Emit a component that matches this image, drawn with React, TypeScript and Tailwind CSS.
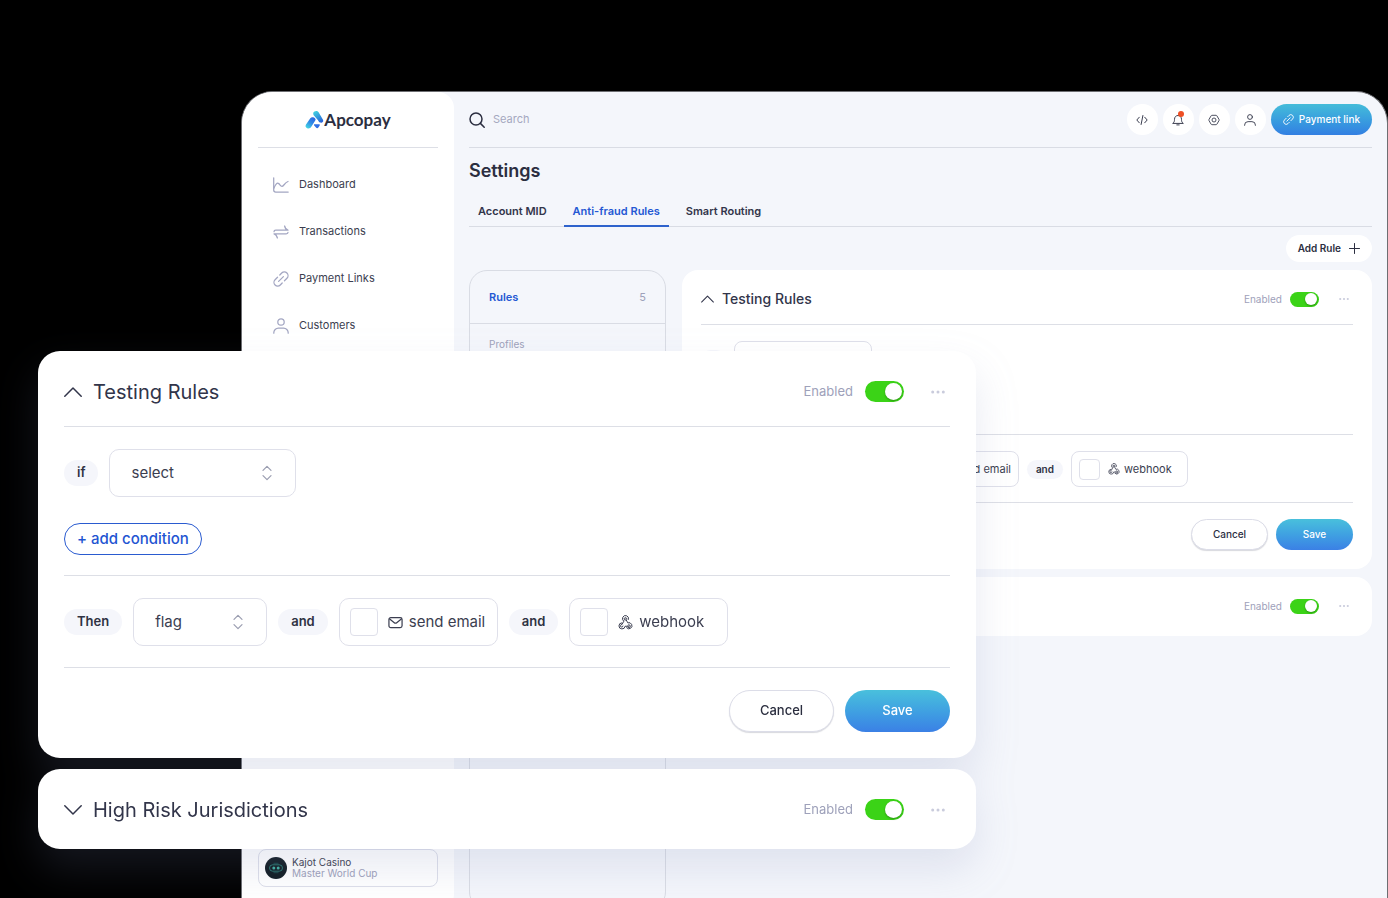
import React, { useId, useState } from 'react';
import clsx from 'clsx';

type Size = 'sm' | 'lg';

interface IconProps {
  className?: string;
}

const ChartIcon = ({ className }: IconProps) => (
  <svg className={className} viewBox="0 0 16 16" fill="none" stroke="currentColor" strokeWidth="1.250" strokeLinecap="round" strokeLinejoin="round">
    <path d="M.7.8v12.200a2 2 0 0 0 2 2h12.500" />
    <path d="M.9 11.200C2.400 7.400 4 5.600 5.400 6.400c1.500.8 1.900 3 3.600 3 1.600 0 2.600-3.600 6-4.900" />
  </svg>
);

const TransferIcon = ({ className }: IconProps) => (
  <svg className={className} viewBox="0 0 16 16" fill="none" stroke="currentColor" strokeWidth="1.250" strokeLinecap="round" strokeLinejoin="round">
    <path d="M1 7.700C1 6.700 1.700 6.200 2.800 6.200H15C13.200 5.800 12.100 4.200 11.600 2" />
    <path d="M15 8.300c0 1-.7 1.500-1.800 1.500H1c1.800.4 2.900 2 3.400 4.200" />
  </svg>
);

const LinkIcon = ({ className }: IconProps) => (
  <svg className={className} viewBox="0 0 16 16" fill="none" stroke="currentColor" strokeWidth="1.250" strokeLinecap="round" strokeLinejoin="round">
    <g transform="rotate(-45 8 8)">
      <path d="M10 4.300h2.700a3.700 3.700 0 0 1 0 7.400H9.200" />
      <path d="M6 11.700H3.300a3.700 3.700 0 0 1 0-7.400h3.500" />
      <path d="M4.600 8h6.800" />
    </g>
  </svg>
);

const PersonIcon = ({ className }: IconProps) => (
  <svg className={className} viewBox="0 0 16 16" fill="none" stroke="currentColor" strokeWidth="1.250" strokeLinecap="round" strokeLinejoin="round">
    <circle cx="8" cy="4" r="3.200" />
    <path d="M.8 15.200v-.4a4.600 4.600 0 0 1 4.600-4.600h5.200a4.600 4.600 0 0 1 4.600 4.600v.4" />
  </svg>
);

const CodeIcon = ({ className }: IconProps) => (
  <svg className={className} viewBox="0 0 12 12" fill="none" stroke="currentColor" strokeLinecap="round" strokeLinejoin="round">
    <path d="M3.300 3.200.8 6l2.500 2.800M8.700 3.200 11.200 6 8.700 8.800M6.900 1.500 5.100 10.500" />
  </svg>
);

const BellIcon = ({ className }: IconProps) => (
  <svg className={className} viewBox="0 0 12 12" fill="none" stroke="currentColor" strokeLinecap="round" strokeLinejoin="round">
    <path d="M1 9.200c1.200-.8 1.500-1.900 1.500-3.900C2.500 3 4 1.500 6 1.500S9.500 3 9.500 5.300c0 2 .3 3.100 1.500 3.900z" />
    <path d="M4.800 10.900h2.400" />
  </svg>
);

const GearIcon = ({ className }: IconProps) => (
  <svg className={className} viewBox="0 0 12 12" fill="none" stroke="currentColor" strokeWidth=".9" strokeLinejoin="round">
    <path d="M4 1.300h4q.6 0 .9.500L11 5.400q.3.600 0 1.200L8.900 10.200q-.3.500-.9.500H4q-.6 0-.9-.5L1 6.600q-.3-.6 0-1.200L3.100 1.800q.3-.5.900-.5z" />
    <circle cx="6" cy="6" r="2" />
  </svg>
);

const SearchIcon = ({ className }: IconProps) => (
  <svg className={className} viewBox="0 0 16 16" fill="none" stroke="currentColor" strokeWidth="1.500" strokeLinecap="round">
    <circle cx="7" cy="7" r="6" />
    <path d="m11.400 11.400 3.800 3.800" />
  </svg>
);

const MailIcon = ({ className }: IconProps) => (
  <svg className={className} viewBox="0 0 16 16" fill="none" stroke="currentColor" strokeWidth="1.300" strokeLinecap="round" strokeLinejoin="round">
    <rect x="1" y="2.700" width="14" height="10.800" rx="2" />
    <path d="M1.800 4.200 6.700 8.200a2 2 0 0 0 2.600 0l4.900-4" />
  </svg>
);

const WebhookIcon = ({ className }: IconProps) => (
  <svg className={className} viewBox="0 0 24 24" fill="none" stroke="currentColor" strokeWidth="1.600" strokeLinecap="round" strokeLinejoin="round">
    <path d="M16.800 7A4.900 4.900 0 1 0 9.300 9.900L6.300 15.300a2 2 0 1 0 1.600 2.300" />
    <path d="M14.200 6.600a2.200 2.200 0 1 0-2.800 2M12.200 6.300l3.500 6.300a4.900 4.900 0 1 1-1.900 7.900" />
    <path d="M6 12.500a4.900 4.900 0 1 0 5.300 5.500h6.200" />
    <path d="M15.900 16.200a2.300 2.300 0 1 1 0 3.500" />
  </svg>
);

const SortIcon = ({ className }: IconProps) => (
  <svg className={className} viewBox="0 0 10 16" fill="none" stroke="currentColor" strokeWidth="1.200" strokeLinecap="round" strokeLinejoin="round">
    <path d="M1 5.300 5 1.300l4 4M1 10.700l4 4 4-4" />
  </svg>
);

const Chevron = ({ up, className }: IconProps & { up: boolean }) => (
  <svg className={className} viewBox="0 0 18 10" fill="none" stroke="currentColor" strokeWidth="1.500" strokeLinecap="round" strokeLinejoin="round">
    <path d={up ? 'M.8 9.200 9 1l8.200 8.200' : 'M.8.800 9 9l8.200-8.200'} />
  </svg>
);

const Logo = () => (
  <svg className="h-[19px] w-[19px]" viewBox="0 0 19 19" fill="none">
    <defs>
      <linearGradient id="logo-left" x1="9" y1="7" x2="1" y2="18" gradientUnits="userSpaceOnUse">
        <stop offset="0" stopColor="#2a63e0" />
        <stop offset=".45" stopColor="#2f86e6" />
        <stop offset="1" stopColor="#45dde4" />
      </linearGradient>
      <linearGradient id="logo-right" x1="10" y1="1" x2="17" y2="13" gradientUnits="userSpaceOnUse">
        <stop offset="0" stopColor="#41d3e0" />
        <stop offset="1" stopColor="#2558d8" />
      </linearGradient>
    </defs>
    <path d="M8.300 2.800C9 .9 12.200.1 13.600 2.200L18 9.800c1 2-1 3.300-2.800 2.700-1.300-.5-1.700-1.400-2.400-2.600L8.700 5.200C8.200 4.400 8 3.600 8.300 2.800z" fill="url(#logo-right)" />
    <path d="M5.300 8.300c1-1.500 3.700-1.300 5 .4.500.7.200 1.300-.2 2L6.300 16.800c-.9 1.500-2.500 2-4.100 1.400-1.700-.7-2.100-2.300-1.200-3.800z" fill="url(#logo-left)" />
    <path d="M9.600 14.300h4.400c.8 0 1.100.6.700 1.200l-1.300 2c-.6.900-1.800.9-2.400.1l-1.800-2.100c-.5-.6-.4-1.200.4-1.200z" fill="#2f6fe6" />
  </svg>
);

const Dots = ({ size }: { size: Size }) => (
  <button type="button" aria-label="More actions" className="flex items-center text-[#c9cbdc]">
    <svg className={size === 'lg' ? 'h-4 w-[14px]' : 'h-3 w-[10px]'} viewBox="0 0 14 4" fill="currentColor">
      <circle cx="1.700" cy="2" r="1.500" />
      <circle cx="7" cy="2" r="1.500" />
      <circle cx="12.300" cy="2" r="1.500" />
    </svg>
  </button>
);

const Toggle = ({ size }: { size: Size }) => {
  const id = useId();
  const [on, setOn] = useState(true);
  const lg = size === 'lg';
  return (
    <div className={clsx('flex items-center', lg ? 'gap-3' : 'gap-2')}>
      <label htmlFor={id} className={clsx('text-[#9ea1ba]', lg ? 'text-[13px]' : 'text-[10px]')}>
        Enabled
      </label>
      <input
        id={id}
        type="checkbox"
        role="switch"
        checked={on}
        onChange={(e) => setOn(e.target.checked)}
        className={clsx(
          'flex cursor-pointer appearance-none items-center rounded-full bg-gray-300 px-[2px] before:block before:rounded-full before:bg-white before:shadow-[0_1px_2px_rgba(0,0,0,0.3)] before:content-[""] checked:justify-end checked:bg-[#3bd317]',
          lg ? 'h-[21px] w-[39px] before:size-[17px]' : 'h-[15px] w-[29px] before:size-3',
        )}
      />
    </div>
  );
};

const Pill = ({ size, children }: { size: Size; children: React.ReactNode }) => (
  <span
    className={clsx(
      'flex items-center rounded-full bg-[#f5f6fb] font-semibold text-[#2f3243]',
      size === 'lg' ? 'h-[26px] px-[13px] text-[13px]' : 'h-[19px] px-[9px] text-[10px]',
    )}
  >
    {children}
  </span>
);

const SelectBox = ({ size, value, wide }: { size: Size; value: string; wide?: boolean }) => {
  const lg = size === 'lg';
  return (
    <div
      className={clsx(
        'flex items-center border border-[#dfe0ea] bg-white',
        lg ? 'h-12 rounded-[10px] pr-[23px] pl-[21px]' : 'h-9 rounded-lg pr-[17px] pl-[15px]',
        lg ? (wide ? 'w-[187px]' : 'w-[134px]') : wide ? 'w-[138px]' : 'w-[98px]',
      )}
    >
      <select
        aria-label={value}
        className={clsx('min-w-0 flex-1 appearance-none bg-transparent text-[#3b3e50] outline-none', lg ? 'text-[15px]' : 'text-[11px]')}
      >
        <option>{value}</option>
      </select>
      <SortIcon className={clsx('text-[#9a9db0]', lg ? 'h-4 w-[10px]' : 'h-3 w-2')} />
    </div>
  );
};

const CheckBox = ({ size, icon: Icon, label }: { size: Size; icon: React.FC<IconProps>; label: string }) => {
  const lg = size === 'lg';
  return (
    <label
      className={clsx(
        'flex items-center border border-[#dfe0ea] bg-white text-[#3b3e50]',
        lg ? 'h-12 w-[159px] rounded-[10px] pl-[10px] text-[15px]' : 'h-9 w-[117px] rounded-lg pl-[7px] text-[11px]',
      )}
    >
      <input
        type="checkbox"
        className={clsx(
          'shrink-0 appearance-none rounded border border-[#dfe0ea] bg-white checked:bg-[#2257d0]',
          lg ? 'size-7' : 'size-[21px]',
        )}
      />
      <Icon className={clsx('shrink-0', lg ? 'mr-[6px] ml-[10px] size-[15px]' : 'mr-1 ml-2 size-3')} />
      <span className="whitespace-nowrap">{label}</span>
    </label>
  );
};

const RuleHeader = ({ size, title, open }: { size: Size; title?: string; open: boolean }) => {
  const lg = size === 'lg';
  return (
    <div className={clsx('flex items-center', lg ? 'h-[75px] pt-[6px]' : 'h-[54px] pt-1')}>
      {title && (
        <button type="button" className={clsx('flex items-center text-[#32354a]', lg ? 'gap-[11px]' : 'gap-2')}>
          <Chevron up={open} className={lg ? 'h-[10px] w-[18px]' : 'h-2 w-[13px]'} />
          <h2 className={lg ? 'text-xl' : 'text-sm font-medium'}>{title}</h2>
        </button>
      )}
      <div className={clsx('ml-auto flex items-center', lg ? 'gap-[27px] pr-[5px]' : 'gap-5 pr-1')}>
        <Toggle size={size} />
        <Dots size={size} />
      </div>
    </div>
  );
};

const RuleCard = ({ size }: { size: Size }) => {
  const lg = size === 'lg';
  return (
    <section className={clsx('bg-white', lg ? 'rounded-[22px] px-[26px] pb-[26px]' : 'rounded-2xl px-[19px] pb-[19px]')}>
      <RuleHeader size={size} title="Testing Rules" open />
      <div className={clsx('border-y border-[#dddfe6]', lg ? 'pt-[22px] pb-5' : 'pt-4 pb-[14px]')}>
        <div className={clsx('flex items-center', lg ? 'gap-[11px]' : 'gap-2')}>
          <Pill size={size}>if</Pill>
          <SelectBox size={size} value="select" wide />
        </div>
        <button
          type="button"
          className={clsx(
            'flex items-center rounded-full border border-[#2a5bd0] font-medium text-[#1f55d2]',
            lg ? 'mt-[26px] h-8 px-3 text-[15px]' : 'mt-[19px] h-6 px-2 text-[11px]',
          )}
        >
          + add condition
        </button>
      </div>
      <div
        className={clsx(
          'flex items-center border-b border-[#dddfe6]',
          lg ? 'gap-[11px] pt-[22px] pb-[21px]' : 'gap-2 pt-4 pb-[15px]',
        )}
      >
        <Pill size={size}>Then</Pill>
        <SelectBox size={size} value="flag" />
        <Pill size={size}>and</Pill>
        <CheckBox size={size} icon={MailIcon} label="send email" />
        <Pill size={size}>and</Pill>
        <CheckBox size={size} icon={WebhookIcon} label="webhook" />
      </div>
      <div className={clsx('flex justify-end font-medium', lg ? 'gap-[11px] pt-[22px] text-[13px]' : 'gap-2 pt-4 text-[10px]')}>
        <button
          type="button"
          className={clsx(
            'rounded-full border border-[#dcdde8] bg-white text-[#2b2e3f] shadow-[0_1px_1px_rgba(60,64,90,0.2)]',
            lg ? 'h-[42px] w-[105px]' : 'h-[31px] w-[77px]',
          )}
        >
          Cancel
        </button>
        <button
          type="button"
          className={clsx(
            'rounded-full bg-linear-to-b from-[#49c0dc] to-[#3b80e5] text-white',
            lg ? 'h-[42px] w-[105px]' : 'h-[31px] w-[77px]',
          )}
        >
          Save
        </button>
      </div>
    </section>
  );
};

const navItems = [
  { label: 'Dashboard', icon: ChartIcon },
  { label: 'Transactions', icon: TransferIcon },
  { label: 'Payment Links', icon: LinkIcon },
  { label: 'Customers', icon: PersonIcon },
];

const Sidebar = () => (
  <aside className="-mb-3 flex w-[212px] shrink-0 flex-col rounded-r-2xl bg-white px-4 pb-[23px]">
    <div className="flex h-14 items-center justify-center border-b border-[#dddfe6] font-[Lato,sans-serif]">
      <Logo />
      <span className="text-[17px] font-bold text-[#2b2e40]">Apcopay</span>
    </div>
    <nav className="flex flex-col px-[15px] pt-[13px]">
      {navItems.map(({ label, icon: Icon }) => (
        <a key={label} href="#" className="flex h-[47px] items-center gap-[10px] text-[11px] text-[#3b3e50]">
          <Icon className="size-4 text-[#a3a6c2]" />
          {label}
        </a>
      ))}
    </nav>
    <button type="button" className="mt-auto flex h-[38px] items-center gap-[5px] rounded-lg border border-[#dddfea] px-[6px] text-left">
      <svg className="size-[22px]" viewBox="0 0 22 22" fill="none">
        <circle cx="11" cy="11" r="11" fill="#101b22" />
        <rect x="4.500" y="7.800" width="13" height="6.400" rx="3.200" stroke="#2f8a80" strokeWidth=".8" />
        <circle cx="8.800" cy="11" r="1.500" fill="#3fae9f" />
        <circle cx="13.200" cy="11" r="1.500" fill="#3fae9f" />
        <path d="M8.500 6.300h5M8.500 15.700h5" stroke="#1f5f5c" strokeWidth=".7" />
      </svg>
      <span className="text-[10px] leading-[11px] text-[#3b3e50]">
        Kajot Casino
        <span className="block text-[#9ea1ba]">Master World Cup</span>
      </span>
    </button>
  </aside>
);

const actions = [
  { label: 'Developers', icon: CodeIcon },
  { label: 'Notifications', icon: BellIcon, dot: true },
  { label: 'Preferences', icon: GearIcon },
  { label: 'Profile', icon: PersonIcon },
];

const TopBar = () => (
  <header className="flex h-14 items-center border-b border-[#d9dce4]">
    <SearchIcon className="size-4 text-[#2b2e40]" />
    <input
      type="search"
      aria-label="Search"
      placeholder="Search"
      className="ml-2 min-w-0 flex-1 bg-transparent text-[11px] outline-none placeholder:text-[#a5a8c0]"
    />
    <div className="flex gap-[5px]">
      {actions.map(({ label, icon: Icon, dot }) => (
        <button
          key={label}
          type="button"
          aria-label={label}
          className="relative flex size-[31px] items-center justify-center rounded-full bg-white text-[#3b3e50]"
        >
          <Icon className="size-3" />
          {dot && <span className="absolute top-[7px] left-[15px] size-[6px] rounded-full bg-[#ee4f25]" />}
        </button>
      ))}
      <button
        type="button"
        className="flex h-[31px] items-center gap-[5px] rounded-full bg-linear-to-b from-[#45bcd9] to-[#337fe2] px-3 text-[10px] font-medium text-white"
      >
        <LinkIcon className="size-[11px]" />
        Payment link
      </button>
    </div>
  </header>
);

const tabs = ['Account MID', 'Anti-fraud Rules', 'Smart Routing'];

const Tabs = () => {
  const [active, setActive] = useState(tabs[1]);
  return (
    <div role="tablist" className="flex gap-2 border-b border-[#d9dce4]">
      {tabs.map((tab) => (
        <button
          key={tab}
          role="tab"
          type="button"
          aria-selected={tab === active}
          onClick={() => setActive(tab)}
          className={clsx(
            '-mb-px h-[31px] border-b-2 px-[9px] pt-[2px] text-[11px] font-semibold',
            tab === active ? 'border-[#2e62cc] text-[#2458d3]' : 'border-transparent text-[#32354a]',
          )}
        >
          {tab}
        </button>
      ))}
    </div>
  );
};

export default function App() {
  return (
    <div className="relative flex min-h-screen flex-col overflow-hidden bg-black pt-[91px] pl-[241px] font-[Inter,sans-serif]">
      <div className="flex flex-1 overflow-hidden rounded-t-[32px] border border-b-0 border-[#6d6e72] bg-[#f4f6fb]">
        <Sidebar />
        <main className="flex min-w-0 flex-1 flex-col px-[15px]">
          <TopBar />
          <h1 className="pt-[9px] text-lg leading-7 font-semibold text-[#2b2e40]">Settings</h1>
          <div className="pt-[11px]">
            <Tabs />
          </div>
          <button
            type="button"
            className="mt-2 flex h-[27px] items-center gap-2 self-end rounded-full bg-white px-3 text-[10px] font-semibold text-[#2b2e40]"
          >
            Add Rule
            <svg className="size-[11px]" viewBox="0 0 11 11" stroke="currentColor" strokeLinecap="round">
              <path d="M5.500.500v10M.500 5.500h10" />
            </svg>
          </button>
          <div className="mt-2 flex flex-1 gap-4">
            <div className="-mb-3 w-[197px] shrink-0 rounded-[18px] border border-[#d9dce4]">
              <a href="#" className="flex h-[53px] items-center justify-between border-b border-[#d9dce4] px-[19px] text-[11px]">
                <span className="font-semibold text-[#2458d3]">Rules</span>
                <span className="text-[#9ea1ba]">5</span>
              </a>
              <p className="px-[19px] pt-3 text-[10px] leading-4 text-[#9ea1ba]">Profiles</p>
            </div>
            <div className="flex min-w-0 flex-1 flex-col gap-2">
              <RuleCard size="sm" />
              <section className="rounded-2xl bg-white px-[19px] pb-[5px]">
                <RuleHeader size="sm" open={false} />
              </section>
            </div>
          </div>
        </main>
      </div>

      {/* enlarged rule cards floating above the dashboard */}
      <div className="absolute top-[351px] right-[412px] left-[38px] flex flex-col gap-[11px] drop-shadow-[0_20px_20px_rgba(120,128,175,0.17)]">
        <RuleCard size="lg" />
        <section className="rounded-[22px] bg-white px-[26px] pb-[5px]">
          <RuleHeader size="lg" title="High Risk Jurisdictions" open={false} />
        </section>
      </div>
    </div>
  );
}
